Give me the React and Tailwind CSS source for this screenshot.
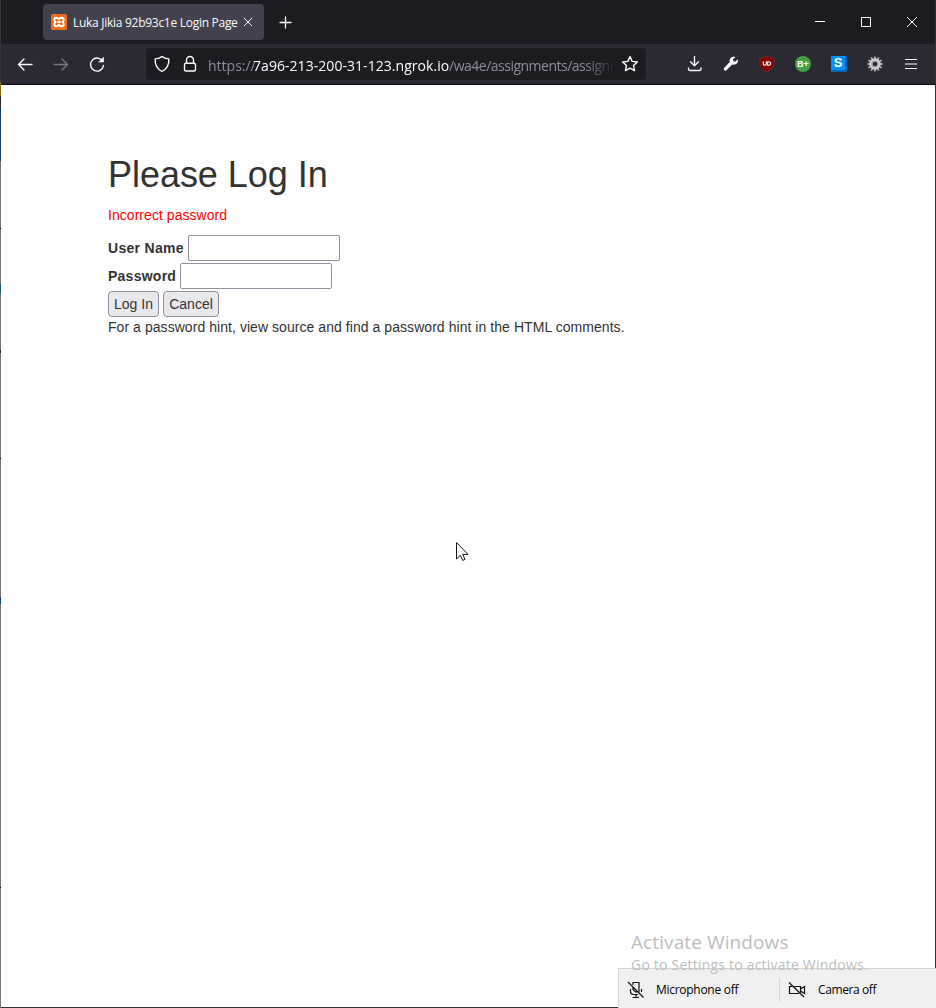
import React from "react";

const ui = "font-['Open_Sans','Noto_Sans',sans-serif]";

function Icon({ children, className = "", size = 18 }) {
  return (
    <svg
      width={size}
      height={size}
      viewBox={`0 0 ${size} ${size}`}
      fill="none"
      stroke="currentColor"
      strokeWidth="1.4"
      strokeLinecap="round"
      strokeLinejoin="round"
      className={`block shrink-0 ${className}`}
    >
      {children}
    </svg>
  );
}

function ToolCell({ children }) {
  return <div className="flex h-10 w-9 shrink-0 items-center justify-center">{children}</div>;
}

function TitleBar() {
  return (
    <header className="flex h-11 shrink-0 items-start bg-[#1c1b22] text-[#fbfbfe]">
      <div className="mt-1 ml-[42px] flex h-9 w-[221px] items-center rounded bg-[#42414d] pl-2">
        <svg width="16" height="16" viewBox="0 0 16 16" className="block shrink-0">
          <rect width="16" height="16" rx="1.5" fill="#ee6c1c" />
          <path
            d="M8 5.300C7.300 4 6.200 3.700 5.100 3.700A2.100 2.100 0 0 0 3.700 7L4.500 8l-.8 1a2.100 2.100 0 0 0 1.400 3.300c1.100 0 2.200-.3 2.900-1.600.7 1.300 1.800 1.600 2.900 1.600A2.100 2.100 0 0 0 12.300 9l-.8-1 .8-1a2.100 2.100 0 0 0-1.400-3.300C9.800 3.700 8.700 4 8 5.300zM6.300 8h3.400"
            fill="none"
            stroke="#fff"
            strokeWidth="2"
            strokeLinejoin="round"
          />
        </svg>
        <span className={`ml-[6px] mt-px w-[165px] whitespace-nowrap text-[12px] tracking-[-0.28px] ${ui}`}>
          Luka Jikia 92b93c1e Login Page
        </span>
        <svg width="10" height="10" viewBox="0 0 10 10" className="ml-[5px] shrink-0" stroke="#fbfbfe" strokeWidth="1">
          <path d="M1 1l8 8M9 1l-8 8" />
        </svg>
      </div>
      <svg width="13" height="13" viewBox="0 0 13 13" className="mt-4 ml-[15px]" stroke="#fbfbfe" strokeWidth="1.300" strokeLinecap="round">
        <path d="M6.500 1v11M1 6.500h11" />
      </svg>
      <div className="ml-auto flex h-11 items-center text-white">
        <div className="flex w-[46px] justify-center">
          <svg width="10" height="10" viewBox="0 0 10 10"><path d="M0 4h10v1H0z" fill="currentColor" /></svg>
        </div>
        <div className="flex w-[46px] justify-center">
          <svg width="10" height="10" viewBox="0 0 10 10" fill="none" stroke="currentColor"><path d="M.5.5h9v9h-9z" /></svg>
        </div>
        <div className="flex w-[46px] justify-center">
          <svg width="10" height="10" viewBox="0 0 10 10" stroke="currentColor"><path d="M0 0l10 10M10 0L0 10" /></svg>
        </div>
      </div>
    </header>
  );
}

function AddressBar() {
  return (
    <div className="ml-[31px] flex h-8 w-[500px] items-center rounded bg-[#1c1b22] pl-[7px] text-[#fbfbfe]">
      <Icon>
        <path d="M9 1.500C7.300 3 4.500 3.700 2.200 3.900c-.4 5 1.400 9.700 6.800 12.600 5.400-2.900 7.200-7.600 6.800-12.600C13.500 3.700 10.700 3 9 1.500z" />
      </Icon>
      <Icon className="ml-[10px]">
        <rect x="3.500" y="8.200" width="11" height="7.800" rx="1.500" />
        <path d="M5.500 8V5a3.500 3.500 0 0 1 7 0v3" />
      </Icon>
      <div
        className={`ml-[9px] mt-[3px] flex w-[406px] overflow-hidden whitespace-nowrap text-[14px] leading-8 text-[#8f8f98] [mask-image:linear-gradient(to_right,black_376px,transparent_408px)] ${ui}`}
      >
        <span className="w-[45px] shrink-0">https://</span>
        <span className="w-[196px] shrink-0 tracking-[0.05px] text-[#fbfbfe]">7a96-213-200-31-123.ngrok.io</span>
        <span className="shrink-0 tracking-[-0.5px]">/wa4e/assignments/assignm</span>
      </div>
      <Icon className="ml-[7px]">
        <path d="M9 1.600l2.200 4.800 5.200.6-3.900 3.500 1.100 5.200L9 13.100l-4.600 2.600 1.100-5.200L1.600 7l5.200-.6z" />
      </Icon>
    </div>
  );
}

const teeth = [0, 30, 60, 90, 120, 150, 180, 210, 240, 270, 300, 330];

function Toolbar() {
  return (
    <nav className="flex h-10 shrink-0 items-center bg-[#2b2a33] pl-[6px] pr-[6px] text-[#fbfbfe]">
      <ToolCell>
        <Icon><path d="M16 9.500H2.500M8 4L2.500 9.500 8 15" /></Icon>
      </ToolCell>
      <ToolCell>
        <Icon className="text-[#78777f]"><path d="M2 9.500h13.500M10 4l5.500 5.500L10 15" /></Icon>
      </ToolCell>
      <ToolCell>
        <Icon>
          <path d="M14.700 6.300A6.500 6.500 0 1 0 15.500 10.500" />
          <path d="M15.500 2.500v4.500H11z" fill="currentColor" strokeWidth=".6" />
        </Icon>
      </ToolCell>
      <AddressBar />
      <div className="ml-auto flex">
        <ToolCell>
          <Icon><path d="M8.500 1.500v9M4.500 6.700l4 4 4-4M2.500 13v1a1.500 1.500 0 0 0 1.500 1.500h9.500a1.500 1.500 0 0 0 1.500-1.500v-1" /></Icon>
        </ToolCell>
        <ToolCell>
          <svg width="16" height="16" viewBox="0 0 16 16" fill="currentColor">
            <path d="M14.800 3.300l-2.500 2.400-1.900-.4-.5-1.800L12.400 1C10.400.300 8.400.900 7.300 2.400c-.8 1.100-.9 2.400-.5 3.600L1.300 11.800a1.600 1.600 0 0 0 2.400 2.300l5.500-5.600c1.600.6 3.400.2 4.500-.9 1.200-1.200 1.600-2.800 1.100-4.300z" />
          </svg>
        </ToolCell>
        <ToolCell>
          <svg width="16" height="16" viewBox="0 0 16 16">
            <path d="M8 .3C5.800 1.500 3.500 1.900 1 2v5.300c0 4 3.200 6.400 7 8.400 3.800-2 7-4.400 7-8.400V2C12.500 1.900 10.200 1.500 8 .3z" fill="#800000" stroke="#a3393c" strokeWidth=".5" />
            <path d="M4.300 5.300v2.600q0 1.300 1.500 1.300t1.500-1.300V5.300M8.700 5.700v3.500h1q2 0 2-1.750t-2-1.750z" fill="none" stroke="#fff" strokeWidth="1.100" />
          </svg>
        </ToolCell>
        <ToolCell>
          <div className="flex size-4 items-center justify-center rounded-full bg-[#43a047] font-['Liberation_Sans',sans-serif] text-[9px] leading-4 font-bold text-white">B+</div>
        </ToolCell>
        <ToolCell>
          <div className="flex size-4 items-start bg-[#0763af]">
            <div className="flex h-[14px] w-[14px] items-center justify-center bg-[#0091ff] font-['Liberation_Sans',sans-serif] text-[13px] leading-[14px] font-bold text-white">S</div>
          </div>
        </ToolCell>
        <ToolCell>
          <svg width="16" height="16" viewBox="0 0 16 16">
            <g stroke="#b5b5b5" strokeWidth="1.800">
              {teeth.map((a) => (
                <path key={a} d="M8 .4v3" transform={`rotate(${a} 8 8)`} />
              ))}
            </g>
            <circle cx="8" cy="8" r="4" fill="none" stroke="#d0d0d0" strokeWidth="3.400" />
            <circle cx="8" cy="8" r="3.100" fill="none" stroke="#8f8f8f" strokeWidth=".9" />
          </svg>
        </ToolCell>
        <ToolCell>
          <Icon><path d="M3.500 4.500h11M3.500 9h11M3.500 13.500h11" strokeWidth="1.200" /></Icon>
        </ToolCell>
      </div>
    </nav>
  );
}

const button =
  "h-[26px] rounded-[4px] border border-[#8f8f9d] bg-[#e9e9ed] text-center leading-6";

function LoginPage() {
  return (
    <main className="flex grow flex-col border-t border-[#0c0c0d] bg-white pl-[107px] font-['Liberation_Sans',Arial,sans-serif] text-[14px] leading-5 text-[#333]">
      <h1 className="mt-[70px] text-[36px] leading-10 tracking-[-0.04px]">Please Log In</h1>
      <p className="mt-[10px] tracking-[0.05px] text-[#f00]">Incorrect password</p>
      <form className="mt-[10px] flex flex-col gap-[2px]">
        <div className="flex h-[26px] items-center">
          <label htmlFor="name" className="w-20 font-bold tracking-[0.3px] whitespace-nowrap">User Name</label>
          <input id="name" type="text" className="h-[26px] w-[152px] rounded-[2px] border border-[#8f8f9d] bg-white" />
        </div>
        <div className="flex h-[26px] items-center">
          <label htmlFor="pw" className="w-[72px] font-bold tracking-[0.25px]">Password</label>
          <input id="pw" type="password" className="h-[26px] w-[152px] rounded-[2px] border border-[#8f8f9d] bg-white" />
        </div>
        <div className="flex gap-1">
          <button type="button" className={`w-[51px] ${button}`}>Log In</button>
          <button type="button" className={`w-[56px] ${button}`}>Cancel</button>
        </div>
      </form>
      <p className="tracking-[0.055px]">For a password hint, view source and find a password hint in the HTML comments.</p>
    </main>
  );
}

function DeviceBar() {
  return (
    <div className={`absolute right-0 bottom-0 flex h-10 w-[318px] items-center border-t border-l border-[#d2d2d2] bg-[#f0f0f0] text-[12px] text-black ${ui}`}>
      <svg width="18" height="18" viewBox="0 0 18 18" fill="none" stroke="#111" strokeWidth="1.200" className="ml-2 mt-[2px]">
        <path d="M6 4V1.500h6v9.500H8.500L6 8.500V6M3.500 8v2.500q0 3 3 3h4.500M14.500 8v3M9 13.500v3M5.500 16.500H12M1 1l15.500 15.500" />
      </svg>
      <span className="ml-[11px] mt-[3px] w-[123px] whitespace-nowrap tracking-[-0.28px]">Microphone off</span>
      <div className="mt-[3px] h-6 w-px bg-[#d5d5d5]" />
      <svg width="18" height="18" viewBox="0 0 18 18" fill="none" stroke="#111" strokeWidth="1.200" className="ml-2 mt-[2px]">
        <path d="M4 5.500H1.500v7h9.500M6 5.500h6.500v6M12.500 8l4-2.500v7L12.500 10M1 1.500l15 14.500" />
      </svg>
      <span className="ml-[12px] mt-[3px] whitespace-nowrap tracking-[-0.4px]">Camera off</span>
    </div>
  );
}

export default function App() {
  return (
    <div className="relative flex h-[1008px] w-[936px] overflow-hidden bg-white">
      <div className="flex w-px shrink-0 flex-col bg-[#757575]">
        <div className="h-[82px] bg-[#34343a]" />
        <div className="h-[14px] bg-[#8b6914]" />
        <div className="h-3 bg-[#2b2a33]" />
        <div className="h-[53px] bg-[#173b6c]" />
        <div className="h-[67px]" />
        <div className="h-px bg-black" />
        <div className="h-[55px]" />
        <div className="h-[10px] bg-[#245577]" />
        <div className="h-14" />
        <div className="h-[3px] bg-[#301b31]" />
        <div className="h-[105px]" />
        <div className="h-px bg-black" />
        <div className="h-[138px]" />
        <div className="h-[7px] bg-[#173b6c]" />
        <div className="h-[283px]" />
        <div className="h-px bg-black" />
      </div>
      <div className="flex min-w-0 grow flex-col border-r border-b border-[#303034]">
        <TitleBar />
        <Toolbar />
        <LoginPage />
      </div>
      <svg width="14" height="20" viewBox="0 0 14 20" className="absolute top-[542px] left-[456px]">
        <path d="M.5.500v16.500l3.800-3.600 2.400 5 2.300-1-2.300-5h5.300z" fill="#fff" stroke="#15151f" strokeWidth="1" />
      </svg>
      <DeviceBar />
      <div className={`pointer-events-none absolute top-[928px] left-[631px] whitespace-nowrap text-[#bdbdbd] ${ui}`}>
        <div className="text-[19px] leading-7 tracking-[0.1px]">Activate Windows</div>
        <div className="text-[14px] leading-[18px] tracking-[0.21px]">Go to Settings to activate Windows.</div>
      </div>
    </div>
  );
}
